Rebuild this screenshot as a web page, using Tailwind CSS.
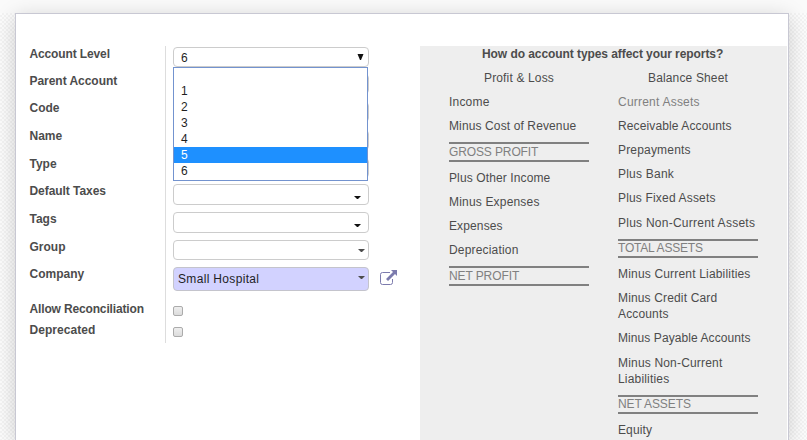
<!DOCTYPE html>
<html lang="en"><head><meta charset="utf-8"><title>Account</title>
<script src="https://cdn.jsdelivr.net/npm/@tailwindcss/browser@4"></script></head>
<body class="h-[440px] w-[807px] overflow-hidden bg-[#fafafa] pt-[13px] font-['Liberation_Sans',Arial,sans-serif] text-[12px] leading-4 text-[#4c4c4c]">
<div class="h-[427px] bg-[repeating-conic-gradient(#f3f3f3_0_25%,#fcfcfc_0_50%)] bg-[length:4px_4px] pl-[15px]">
<main class="flex h-[427px] w-[774px] border border-b-0 border-[#c8c8d3] bg-white pt-8 shadow-[0_4px_20px_rgba(0,0,0,0.18)]">
  <div class="ml-[13px] grid h-[297px] w-[137px] shrink-0 grid-rows-[27px_27px_28px_28px_27px_28px_28px_27px_35px_21px_21px] border-r border-[#dddddd] pl-[0.5px] font-bold">
    <label><span class="tracking-[-0.13px]">Account Level</span></label>
    <label><span class="tracking-[-0.04px]">Parent Account</span></label>
    <label>Code</label><label>Name</label><label>Type</label>
    <label><span class="tracking-[-0.05px]">Default Taxes</span></label>
    <label>Tags</label><label>Group</label><label>Company</label>
    <label><span class="tracking-[-0.15px]">Allow Reconciliation</span></label><label><span class="tracking-[0.05px]">Deprecated</span></label>
  </div>
  <div class="relative ml-[7px] w-[196px] shrink-0 pt-px text-[#1f1f1f]">
    <div class="flex h-5 items-center justify-between rounded-[4px] border border-[#cccccc] pr-1 pl-[7px]"><span class="pt-0.5">6</span>
      <svg width="7" height="7" viewBox="0 0 7 7"><path d="M.5 0h6L4 6H3z" fill="#111"/></svg></div>
    <div class="mt-[7px] h-5 rounded-[4px] border border-[#cccccc]"></div>
    <div class="mt-2 h-5 rounded-[4px] border border-[#cccccc]"></div>
    <div class="mt-2 h-5 rounded-[4px] border border-[#cccccc]"></div>
    <div class="mt-2 h-5 rounded-[4px] border border-[#cccccc]"></div>
    <div class="mt-[6px] flex h-[21px] justify-end rounded-[4px] border border-[#cccccc] pt-[11px] pr-[7px]"><svg width="7" height="4" viewBox="0 0 7 4"><path d="M0 0h7L4 3H3z" fill="#111"/></svg></div>
    <div class="mt-[7px] flex h-[21px] justify-end rounded-[4px] border border-[#cccccc] pt-[11px] pr-[7px]"><svg width="7" height="4" viewBox="0 0 7 4"><path d="M0 0h7L4 3H3z" fill="#111"/></svg></div>
    <div class="mt-[7px] flex h-5 justify-end rounded-[4px] border border-[#cccccc] pt-2 pr-[3px]"><svg width="7" height="4" viewBox="0 0 7 4"><path d="M0 0h7L4 3H3z" fill="#4c4c4c"/></svg></div>
    <div class="mt-[7px] flex h-6 justify-between rounded-[4px] border border-[#c4c4cc] bg-[#d2d2ff] pt-[3px] pr-[3px] pl-1"><span class="tracking-[0.33px]">Small Hospital</span><svg class="mt-[5px]" width="7" height="4" viewBox="0 0 7 4"><path d="M0 0h7L4 3H3z" fill="#4c4c4c"/></svg></div>
    <div class="mt-[15px] size-2.5 rounded-[2px] border border-[#ababab] bg-linear-to-b from-[#eeeeee] to-[#dcdcdc]"></div>
    <div class="mt-[11px] size-2.5 rounded-[2px] border border-[#ababab] bg-linear-to-b from-[#eeeeee] to-[#dcdcdc]"></div>
    <div class="absolute top-[21px] left-0 h-[114px] w-[195px] border border-[#7393cf] bg-white pt-[15px]">
      <div class="pl-[7px]">1</div><div class="pl-[7px]">2</div><div class="pl-[7px]">3</div><div class="pl-[7px]">4</div>
      <div class="bg-[#1e90ff] pl-[7px] text-white">5</div><div class="pl-[7px]">6</div>
    </div>
  </div>
  <svg class="mt-[223px] ml-[11px] shrink-0" width="18" height="17" viewBox="0 0 18 17"><path d="M10 3.5H2.5Q.5 3.5.5 5.500v8q0 2 2 2h8q2 0 2-2V10" fill="none" stroke="#7c7bad"/><path d="M11 1h6v6l-2-2-7 7-2-2 7-7z" fill="#7c7bad"/></svg>
  <section class="ml-[22px] h-[394px] w-[367px] shrink-0 overflow-hidden bg-[#eeeeee]">
    <h2 class="ml-[62px] whitespace-nowrap font-bold tracking-[-0.07px]">How do account types affect your reports?</h2>
    <div class="flex pl-[29px]">
      <div class="w-[140px]">
        <div class="mt-1 py-1 text-center"><span class="tracking-[0.15px]">Profit &amp; Loss</span></div>
        <div class="py-1 tracking-[0.2px]">Income</div>
        <div class="py-1 tracking-[0.12px]">Minus Cost of Revenue</div>
        <div class="my-1 h-5 border-y-2 border-[#808080] tracking-[-0.12px] text-[#808080]">GROSS PROFIT</div>
        <div class="py-1 tracking-[0.12px]">Plus Other Income</div>
        <div class="py-1 tracking-[0.18px]">Minus Expenses</div>
        <div class="py-1 tracking-[0.12px]">Expenses</div>
        <div class="py-1 tracking-[0.18px]">Depreciation</div>
        <div class="my-1 h-5 border-y-2 border-[#808080] tracking-[-0.1px] text-[#808080]">NET PROFIT</div>
      </div>
      <div class="ml-[29px] w-[140px] whitespace-nowrap">
        <div class="mt-1 py-1 text-center"><span class="tracking-[0.15px]">Balance Sheet</span></div>
        <div class="py-1 tracking-[0.22px] text-[#808080]">Current Assets</div>
        <div class="py-1 tracking-[0.12px]">Receivable Accounts</div>
        <div class="py-1 tracking-[0.18px]">Prepayments</div>
        <div class="py-1 tracking-[0.22px]">Plus Bank</div>
        <div class="py-1 tracking-[0.17px]">Plus Fixed Assets</div>
        <div class="mt-px py-1 tracking-[0.25px]">Plus Non-Current Assets</div>
        <div class="my-1 h-[19px] border-y-2 border-[#808080] leading-[15px] tracking-[-0.2px] text-[#808080]">TOTAL ASSETS</div>
        <div class="py-1 tracking-[0.18px]">Minus Current Liabilities</div>
        <div class="py-1 tracking-[0.15px]">Minus Credit Card<br>Accounts</div>
        <div class="py-1 tracking-[0.08px]">Minus Payable Accounts</div>
        <div class="mt-px py-1 tracking-[0.18px]">Minus Non-Current<br>Liabilities</div>
        <div class="my-1 h-[19px] border-y-2 border-[#808080] leading-[15px] tracking-[-0.1px] text-[#808080]">NET ASSETS</div>
        <div class="pt-1 tracking-[0.12px]">Equity</div>
      </div>
    </div>
  </section>
</main>
</div>
</body></html>
